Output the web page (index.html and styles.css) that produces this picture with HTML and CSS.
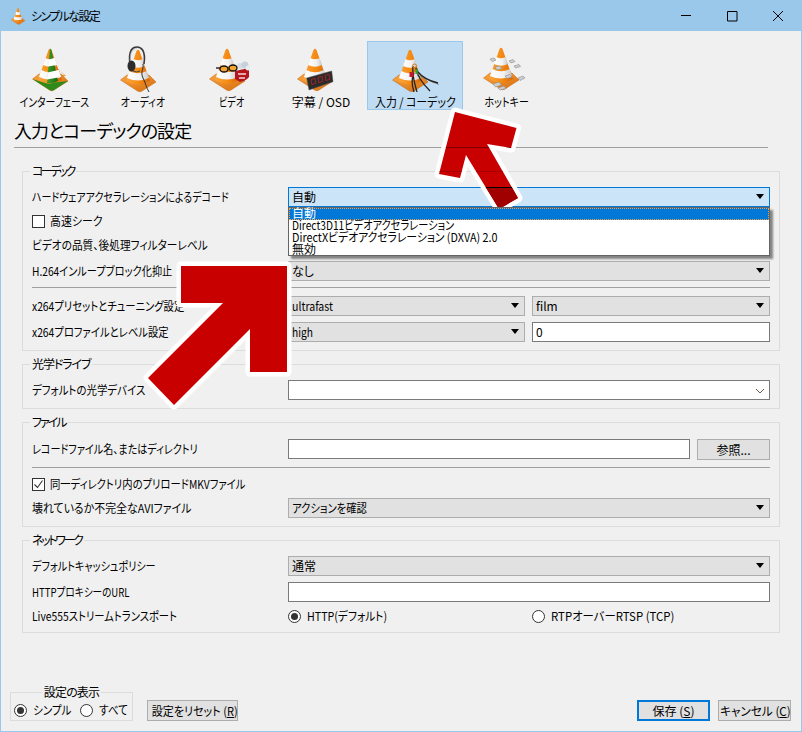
FILE: index.html
```html
<!DOCTYPE html>
<html lang="ja">
<head>
<meta charset="utf-8">
<title>シンプルな設定</title>
<link rel="stylesheet" href="styles.css">
</head>
<body>
<svg class="defs" width="0" height="0" aria-hidden="true">
  <defs>
    <linearGradient id="or" x1="0" x2="1" y1="0" y2="0"><stop offset="0" stop-color="#fba63c"/><stop offset=".55" stop-color="#f58a12"/><stop offset="1" stop-color="#d5660a"/></linearGradient>
    <linearGradient id="wh" x1="0" x2="1" y1="0" y2="0"><stop offset="0" stop-color="#fff"/><stop offset=".6" stop-color="#f2f2f2"/><stop offset="1" stop-color="#c9c9c9"/></linearGradient>
    <linearGradient id="bs" x1="0" x2="1" y1="0" y2="1"><stop offset="0" stop-color="#f9a540"/><stop offset="1" stop-color="#d76c0c"/></linearGradient>
    <linearGradient id="gr" x1="0" x2="1" y1="0" y2="0"><stop offset="0" stop-color="#3f9f2a"/><stop offset="1" stop-color="#156b10"/></linearGradient>
    <symbol id="cone" viewBox="0 0 48 46">
      <path d="M1.500 33 8 28h22l7 7-14 9q-2 1.500-4.500 0Z" fill="url(#bs)" stroke="#c2620c" stroke-width=".5"/>
      <path d="M17.500 4Q19 1.500 20.500 4L31 34Q19 41 7 34Z" fill="url(#or)"/>
      <path d="M14.500 12Q19 14.500 23.500 12L26 19Q19 22.500 12 19Z" fill="url(#wh)"/>
      <path d="M10.300 24Q19 28.500 27.700 24L30 31Q19 36 8 31Z" fill="url(#wh)"/>
    </symbol>
  </defs>
</svg>
<div class="window">
  <header class="titlebar">
    <svg class="app-icon" width="16" height="18" viewBox="0 0 38 46"><use href="#cone" width="48" height="46"/></svg>
    <span class="title">シンプルな設定</span>
    <div class="winbtns">
      <span class="winbtn"><svg width="12" height="12" viewBox="0 0 12 12"><path d="M1 5.500h10" stroke="#000" fill="none"/></svg></span>
      <span class="winbtn"><svg width="12" height="12" viewBox="0 0 12 12"><path d="M1.500 1.500h9.500v9.500h-9.500Z" stroke="#000" fill="none"/></svg></span>
      <span class="winbtn"><svg width="12" height="12" viewBox="0 0 12 12"><path d="M1 1l10 10M11 1L1 11" stroke="#000" fill="none"/></svg></span>
    </div>
  </header>

  <main class="content">
    <nav class="tabs">
      <div class="tab tab-a">
        <svg class="tab-icon" viewBox="0 0 48 46">
          <path d="M27 22l9 8-7 1z" fill="#f29a3a"/><path d="M29 23l5 6-4 .5z" fill="#eee"/>
          <g transform="translate(1 0)">
            <use href="#cone" width="48" height="46"/>
            <path d="M1.500 33 14 37q5 1.500 10-.5L37 35l-14 9q-2 1.500-4.500 0Z" fill="#2f8a1c"/>
            <path d="M19 2.500 20.500 4 27 35q-6 3-11 2Z" fill="url(#gr)"/>
            <path d="M17.500 13.500 23.500 12 26 19 17 20.500Z" fill="#fff"/>
            <path d="M16.500 26.500 27.700 24 30 31 16 33.500Z" fill="#fff"/>
          </g>
        </svg>
        <span class="tab-label sx-82">インターフェース</span>
      </div>
      <div class="tab tab-b">
        <svg class="tab-icon" viewBox="0 0 48 46">
          <use href="#cone" width="48" height="46" transform="translate(0 1)"/>
          <path d="M11 19C9 3 14 1 18 1s9 3 7 17" fill="none" stroke="#3a3a3a" stroke-width="1.600"/>
          <path d="M11.500 17C10 5 15 2.500 18 2.500" fill="none" stroke="#aaa" stroke-width=".6"/>
          <ellipse cx="12.500" cy="20" rx="4" ry="5.500" fill="#2d2d2d"/>
          <path d="M24 18c1 5-3 8 0 14s3 9 6 14" fill="none" stroke="#333" stroke-width="1"/>
          <path d="M14 25q4 2 7 0" fill="none" stroke="#444" stroke-width="1"/>
        </svg>
        <span class="tab-label sx-83">オーディオ</span>
      </div>
      <div class="tab tab-c">
        <svg class="tab-icon" viewBox="0 0 48 46">
          <use href="#cone" width="48" height="46"/>
          <path d="M27 25 41 22v9q-3 4-9 5l-5-3Z" fill="#b3161d"/>
          <path d="M30 28h8M31 32h6" stroke="#f3d7d7" stroke-width="1.500"/>
          <circle cx="32" cy="20" r="3" fill="#d7dde4"/><circle cx="37" cy="19" r="3.500" fill="#c8d0da"/><circle cx="40" cy="22" r="2.500" fill="#e8ecf0"/>
          <ellipse cx="16" cy="23" rx="4" ry="3" fill="#f4a52f" stroke="#111" stroke-width="1.300"/>
          <ellipse cx="25" cy="22" rx="4" ry="3" fill="#f4a52f" stroke="#111" stroke-width="1.300"/>
          <path d="M12 22H8" stroke="#111" stroke-width="1.300"/>
        </svg>
        <span class="tab-label sx-76">ビデオ</span>
      </div>
      <div class="tab tab-d">
        <svg class="tab-icon" viewBox="0 0 48 46">
          <use href="#cone" width="48" height="46" x="-1"/>
          <path d="M9.700 32 34.700 25 36 35.700 12 44Z" fill="#2b2b2b" stroke="#555" stroke-width=".5"/>
          <path d="M14 33.500l4-1.200.8 5-4 1.300ZM21 31.500l4-1.200.8 5-4 1.300ZM28 29.500l4-1.200.8 5-4 1.300Z" fill="none" stroke="#a8242a" stroke-width=".9"/>
        </svg>
        <span class="tab-label">字幕 / OSD</span>
      </div>
      <div class="tab tab-e is-active">
        <svg class="tab-icon" viewBox="0 0 48 46">
          <use href="#cone" width="48" height="46" y="1"/>
          <path d="M26 28c8 2 13 6 22 9" fill="none" stroke="#8d8f8f" stroke-width="1" transform="translate(0 1.500)"/>
          <path d="M22 20c-1 8 1 16 4 26M25 22c1 8 6 15 14 23M26 25c5 6 12 10 21 12M23 27c-3 6-2 13 0 19" fill="none" stroke="#242424" stroke-width="1.300"/>
          <rect x="18.500" y="26" width="4" height="5" fill="#c5182a"/>
          <rect x="24.500" y="23" width="2.500" height="5" fill="#2f9a3b"/>
          <circle cx="23.500" cy="20" r="2" fill="none" stroke="#c97a2a" stroke-width="1"/>
        </svg>
        <span class="tab-label sx-91">入力 / コーデック</span>
      </div>
      <div class="tab tab-f">
        <svg class="tab-icon" viewBox="0 0 48 46">
          <use href="#cone" width="48" height="46" y="-1" x="-1"/>
          <g fill="#cfcfcf" stroke="#8c8c8c" stroke-width=".6">
            <path d="M7 13l4-1 2 2-4 1.500Z"/><path d="M12 21l5-1 2 2.500-5 1.500Z"/>
            <path d="M26 15l4-1.500 2 2-4 1.500Z"/><path d="M31 20l5-1.500 1.500 2-5 1.500Z"/>
            <path d="M35 32l5-2 2 2-5 2.500Z"/><path d="M22 30l5-1.500 2 2.500-5 1.500Z"/>
            <path d="M10 38l6-2 2.500 3-6 2Z"/><path d="M15 42l6-2 2 2.500-6 1.500Z"/>
          </g>
        </svg>
        <span class="tab-label sx-83">ホットキー</span>
      </div>
    </nav>

    <h1 class="page-title">入力とコーデックの設定</h1>

    <fieldset class="group">
      <legend class="lg-a">コーデック</legend>
      <div class="rows">
        <div class="row">
          <span class="label sx-83">ハードウェアアクセラレーションによるデコード</span>
          <div class="combo is-focus"><span>自動</span>
            <ul class="popup">
              <li class="is-selected">自動</li>
              <li><span class="sx-85">Direct3D11ビデオアクセラレーション</span></li>
              <li><span class="sx-90">DirectXビデオアクセラレーション (DXVA) 2.0</span></li>
              <li>無効</li>
            </ul>
          </div>
        </div>
        <div class="row row-check">
          <span class="check"></span><span class="check-text sx-91">高速シーク</span>
        </div>
        <div class="row"><span class="label sx-89">ビデオの品質、後処理フィルターレベル</span></div>
        <div class="row">
          <span class="label sx-85">H.264インループブロック化抑止</span>
          <div class="combo"><span>なし</span></div>
        </div>
        <div class="sep"></div>
        <div class="row">
          <span class="label sx-86">x264プリセットとチューニング設定</span>
          <div class="pair">
            <div class="combo"><span class="sx-88">ultrafast</span></div>
            <div class="combo"><span>film</span></div>
          </div>
        </div>
        <div class="row">
          <span class="label sx-86">x264プロファイルとレベル設定</span>
          <div class="pair">
            <div class="combo"><span class="sx-85">high</span></div>
            <div class="textbox">0</div>
          </div>
        </div>
      </div>
    </fieldset>

    <fieldset class="group">
      <legend class="lg-b">光学ドライブ</legend>
      <div class="rows">
        <div class="row">
          <span class="label sx-87">デフォルトの光学デバイス</span>
          <div class="textbox combo-edit"><svg class="chev" width="10" height="6" viewBox="0 0 10 6"><path d="M1 1l4 4 4-4" fill="none" stroke="#6f5c50"/></svg></div>
        </div>
      </div>
    </fieldset>

    <fieldset class="group group-file">
      <legend class="lg-c">ファイル</legend>
      <div class="rows">
        <div class="row row-file">
          <span class="label sx-84">レコードファイル名、またはディレクトリ</span>
          <div class="textbox"></div>
          <button class="btn btn-browse" type="button">参照...</button>
        </div>
        <div class="sep"></div>
        <div class="row row-check">
          <span class="check is-on"><svg width="11" height="11" viewBox="0 0 11 11"><path d="M1.500 5.500l3 3 5-7" fill="none" stroke="#333" stroke-width="1.100"/></svg></span><span class="check-text sx-86">同一ディレクトリ内のプリロードMKVファイル</span>
        </div>
        <div class="row">
          <span class="label sx-91">壊れているか不完全なAVIファイル</span>
          <div class="combo"><span class="sx-86">アクションを確認</span></div>
        </div>
      </div>
    </fieldset>

    <fieldset class="group">
      <legend class="lg-d">ネットワーク</legend>
      <div class="rows">
        <div class="row">
          <span class="label sx-84">デフォルトキャッシュポリシー</span>
          <div class="combo"><span>通常</span></div>
        </div>
        <div class="row">
          <span class="label sx-80">HTTPプロキシーのURL</span>
          <div class="textbox"></div>
        </div>
        <div class="row row-check">
          <span class="label sx-86">Live555ストリームトランスポート</span>
          <div class="pair">
            <div class="radio-item"><span class="radio is-on"></span><span class="sx-89">HTTP(デフォルト)</span></div>
            <div class="radio-item"><span class="radio"></span><span class="sx-95">RTPオーバーRTSP (TCP)</span></div>
          </div>
        </div>
      </div>
    </fieldset>
  </main>

  <footer class="footer">
    <fieldset class="group display-group">
      <legend>設定の表示</legend>
      <div class="radio-line">
        <div class="radio-item"><span class="radio is-on"></span><span class="sx-88">シンプル</span></div>
        <div class="radio-item"><span class="radio"></span><span class="sx-88">すべて</span></div>
      </div>
    </fieldset>
    <button class="btn btn-reset" type="button"><span class="sx-92 sx-mid">設定をリセット (<u>R</u>)</span></button>
    <div class="spacer"></div>
    <button class="btn btn-primary" type="button">保存 (<u>S</u>)</button>
    <button class="btn" type="button"><span class="sx-97 sx-mid">キャンセル (<u>C</u>)</span></button>
  </footer>

  <svg class="overlay" width="802" height="732" viewBox="0 0 802 732" aria-hidden="true">
    <defs>
      <clipPath id="arrow-clip"><path d="M455 112 516.500 128 511 148 487 144 518 198 499 209 466 155 460 178 439 174Z"/></clipPath>
    </defs>
    <path d="M181 266H287V372H250V329L174 405 148 378 223 303H181Z" fill="#c80000" stroke="#fff" stroke-width="9" stroke-linejoin="round" paint-order="stroke"/>
    <path d="M455 112 516.500 128 511 148 487 144 518 198 499 209 466 155 460 178 439 174Z" fill="#c80000" stroke="#fff" stroke-width="9" stroke-linejoin="round" paint-order="stroke"/>
    <g clip-path="url(#arrow-clip)">
      <rect x="420" y="147" width="120" height="1" fill="#7d0000"/>
      <rect x="420" y="171" width="120" height="1" fill="#a80000"/>
      <rect x="420" y="187" width="120" height="1" fill="#000"/>
      <rect x="420" y="188" width="120" height="22" fill="#a00000"/>
    </g>
  </svg>
</div>
</body>
</html>
```

FILE: styles.css
```css
* { box-sizing: border-box; }
html, body { margin: 0; padding: 0; }
body {
  width: 802px;
  height: 732px;
  overflow: hidden;
  background: #f0f0f0;
  color: #000;
  font-family: "Noto Sans CJK JP", "Noto Sans", sans-serif;
  font-size: 12px;
  line-height: 20px;
  font-feature-settings: "palt";
}
.defs { position: absolute; }

/* Horizontal compression: the reference's UI font has narrow kana */
[class*="sx-"] { display: inline-block; transform-origin: left center; white-space: nowrap; }
.sx-76 { transform: scaleX(.76); }
.sx-80 { transform: scaleX(.80); }
.sx-82 { transform: scaleX(.82); }
.sx-83 { transform: scaleX(.83); }
.sx-84 { transform: scaleX(.84); }
.sx-85 { transform: scaleX(.85); }
.sx-86 { transform: scaleX(.86); }
.sx-87 { transform: scaleX(.87); }
.sx-88 { transform: scaleX(.88); }
.sx-89 { transform: scaleX(.89); }
.sx-90 { transform: scaleX(.90); }
.sx-91 { transform: scaleX(.91); }
.sx-92 { transform: scaleX(.92); }
.sx-95 { transform: scaleX(.95); }
.sx-97 { transform: scaleX(.97); }
.sx-mid, .tab-label { transform-origin: center center; }

.window {
  position: relative;
  display: flex;
  flex-direction: column;
  width: 802px;
  height: 732px;
  border: 1px solid #99c8eb;
  background: #f0f0f0;
}
.overlay { position: absolute; left: -1px; top: -1px; pointer-events: none; }

/* title bar */
.titlebar {
  display: flex;
  align-items: center;
  height: 30px;
  background: #99c8eb;
  padding-left: 9px;
}
.app-icon { margin-right: 5px; }
.title { letter-spacing: -1.6px; }
.winbtns { display: flex; margin-left: auto; }
.winbtn { display: flex; align-items: center; justify-content: center; width: 46px; height: 30px; }

/* main */
.content { display: flex; flex-direction: column; padding: 0 21px; }
.tabs { display: flex; margin: 10px -21px 0; padding-left: 6px; }
.tab {
  display: flex;
  flex-direction: column;
  align-items: center;
  height: 69px;
  padding-top: 5px;
  border: 1px solid transparent;
}
.tab-a { width: 94px; }
.tab-b { width: 84px; }
.tab-c { width: 94px; }
.tab-d { width: 84px; margin-right: 4px; }
.tab-e { width: 96px; }
.tab-f { width: 88px; }
.is-active { background: #bfdcf3; border-color: #99c8eb; }
.tab-icon { width: 48px; height: 46px; flex: none; margin-top: -1px; }
.tab-label { line-height: 14px; margin-top: 3px; white-space: nowrap; }

.page-title {
  margin: 0 12px 15px -8px;
  padding: 7px 0 4px;
  font-size: 18px;
  font-weight: 400;
  line-height: 26px;
  border-bottom: 1px solid #a0a0a0;
  letter-spacing: -.9px;
}

/* group boxes */
.group {
  margin: 0 0 5px;
  padding: 8px 9px;
  border: 1px solid #dcdcdc;
  min-width: 0;
}
.group legend {
  margin-left: -2px;
  padding: 0 2px;
  line-height: 16px;
  letter-spacing: -.8px;
}
.group .lg-a { letter-spacing: -2.6px; }
.group .lg-b { letter-spacing: -1.1px; }
.group .lg-c { letter-spacing: -2px; }
.group .lg-d { letter-spacing: -2.3px; }
.group-file { padding-top: 9px; }
.rows { display: flex; flex-direction: column; gap: 6px; }
.row { display: flex; align-items: center; height: 20px; }
.row-check { height: 16px; }
.row-file { height: 22px; align-items: flex-start; }
.label { flex: none; width: 256px; white-space: nowrap; }
.sep { height: 1px; margin-bottom: 2px; background: #a0a0a0; }
.pair { display: grid; grid-template-columns: 237px 238px; column-gap: 7px; flex: 1; }

/* controls */
.combo {
  position: relative;
  flex: 1;
  height: 20px;
  padding-left: 3px;
  border: 1px solid #adadad;
  background: #e1e1e1;
  line-height: 18px;
}
.combo::after {
  content: "";
  position: absolute;
  right: 5px;
  top: 6px;
  border: 4px solid transparent;
  border-top: 5px solid #000;
  border-bottom: 0;
}
.combo.is-focus { border-color: #0078d7; background: #cce4f7; }
.popup {
  position: absolute;
  left: -1px;
  right: -1px;
  top: 19px;
  z-index: 2;
  margin: 0;
  padding: 0;
  list-style: none;
  height: 49px;
  background: #fff;
  border: 1px solid #646464;
  box-shadow: 3px 3px 2px rgba(0, 0, 0, .45);
  line-height: 9px;
}
.popup li { height: 12px; padding-left: 3px; white-space: nowrap; }
.popup .is-selected { background: #0078d7; color: #fff; line-height: 10px; outline: 1px dotted #f0a050; outline-offset: -1px; }
.textbox {
  position: relative;
  flex: 1;
  height: 20px;
  padding-left: 3px;
  border: 1px solid #7a7a7a;
  background: #fff;
  line-height: 18px;
}
.chev { position: absolute; right: 4px; top: 7px; }
.check {
  flex: none;
  display: flex;
  align-items: center;
  justify-content: center;
  width: 13px;
  height: 13px;
  margin-right: 5px;
  border: 1px solid #333;
  background: #fff;
}
.check-text { white-space: nowrap; }
.radio-item { display: flex; align-items: center; white-space: nowrap; }
.radio {
  flex: none;
  position: relative;
  width: 13px;
  height: 13px;
  margin-right: 6px;
  border: 1px solid #333;
  border-radius: 50%;
  background: #fff;
}
.radio.is-on::after {
  content: "";
  position: absolute;
  left: 2px;
  top: 2px;
  width: 7px;
  height: 7px;
  border-radius: 50%;
  background: #333;
}
.btn {
  flex: none;
  width: 73px;
  height: 21px;
  padding: 0;
  border: 1px solid #adadad;
  background: #e1e1e1;
  color: #000;
  font: inherit;
  font-feature-settings: inherit;
  line-height: 19px;
  white-space: nowrap;
}
.btn-browse { margin-left: 7px; }

/* footer */
.footer {
  display: flex;
  align-items: flex-end;
  gap: 8px;
  margin-top: auto;
  padding: 0 10px 10px 9px;
}
.display-group { width: 123px; margin: 0; padding: 0 3px; height: 37px; }
.display-group legend { margin: 0 auto; }
.radio-line { display: flex; gap: 3px; height: 20px; align-items: center; }
.btn-reset { width: 91px; margin-left: 6px; }
.btn-primary { border: 2px solid #0078d7; line-height: 17px; }
.spacer { flex: 1; }
```
